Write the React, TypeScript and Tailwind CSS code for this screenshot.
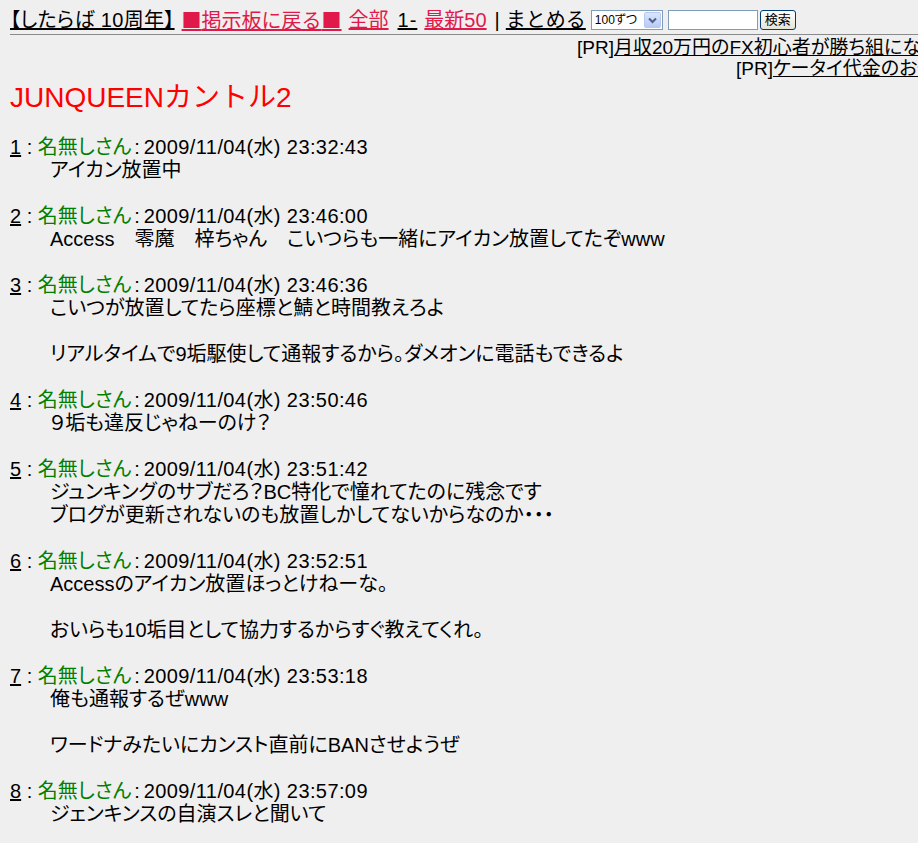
import React from 'react'

type Post = { no: number; time: string; lines: string[] }

const posts: Post[] = [
  { no: 1, time: '23:32:43', lines: ['アイカン放置中'] },
  { no: 2, time: '23:46:00', lines: ['Access　零魔　梓ちゃん　こいつらも一緒にアイカン放置してたぞwww'] },
  { no: 3, time: '23:46:36', lines: ['こいつが放置してたら座標と鯖と時間教えろよ', '', 'リアルタイムで9垢駆使して通報するから。ダメオンに電話もできるよ'] },
  { no: 4, time: '23:50:46', lines: ['９垢も違反じゃねーのけ？'] },
  { no: 5, time: '23:51:42', lines: ['ジュンキングのサブだろ？BC特化で憧れてたのに残念です', 'ブログが更新されないのも放置しかしてないからなのか・・・'] },
  { no: 6, time: '23:52:51', lines: ['Accessのアイカン放置ほっとけねーな。', '', 'おいらも10垢目として協力するからすぐ教えてくれ。'] },
  { no: 7, time: '23:53:18', lines: ['俺も通報するぜwww', '', 'ワードナみたいにカンスト直前にBANさせようぜ'] },
  { no: 8, time: '23:57:09', lines: ['ジェンキンスの自演スレと聞いて'] },
]

function NavBar() {
  return (
    <div className="flex items-center h-[24px] mt-[8px] text-[20px] leading-[24px] whitespace-nowrap">
      <a className="underline text-black tracking-[0.3px]">【したらば 10周年】</a>
      <a className="underline text-[#e0194a] ml-[7px] [font-feature-settings:normal]">
        <span className="font-['Noto_Sans_CJK_JP',sans-serif]">■</span>掲示板に戻る<span className="font-['Noto_Sans_CJK_JP',sans-serif]">■</span>
      </a>
      <a className="underline text-[#e0194a] ml-[7px] [font-feature-settings:normal]">全部</a>
      <a className="underline text-black ml-[9px] tracking-[1px]">1-</a>
      <a className="underline text-[#e0194a] ml-[7px]">最新50</a>
      <span className="ml-[8px] text-black">|</span>
      <a className="underline text-black ml-[6px] [font-feature-settings:normal]">まとめる</a>
      <div className="ml-[5px] flex items-center w-[72px] h-[20px] border border-[#7f9db9] bg-white">
        <span className="flex-1 pl-[3px] text-[12px] leading-[16px] text-black">100ずつ</span>
        <span className="w-[17px] h-[16px] mr-[1px] rounded-[2px] border border-[#b6c9f0] bg-gradient-to-b from-[#dbe5fd] to-[#b7caf6] flex items-center justify-center">
          <svg width="9" height="7" viewBox="0 0 9 7">
            <path d="M1 1.5 L4.5 5 L8 1.5" fill="none" stroke="#4d6185" strokeWidth="2" />
          </svg>
        </span>
      </div>
      <div className="ml-[5px] w-[90px] h-[20px] border border-[#7f9db9] bg-white" />
      <button className="ml-[2px] w-[36px] h-[20px] rounded-[3px] border border-[#003c74] bg-gradient-to-b from-white to-[#e6e3d6] text-[13px] leading-[16px] text-black">
        検索
      </button>
    </div>
  )
}

function PostItem({ post }: { post: Post }) {
  return (
    <div className="mb-[23px]">
      <div className="h-[23px] whitespace-nowrap">
        <a className="underline text-black">{post.no}</a>
        <span> : </span>
        <span className="text-[#008000]">名無しさん</span>
        <span className="pl-[3px] pr-[4px]">:</span>
        <span className="tracking-[0.4px]">2009/11/04(水) {post.time}</span>
      </div>
      <div className="ml-[40px]">
        {post.lines.map((l, i) => (
          <div key={i} className="h-[23px] whitespace-nowrap">{l}</div>
        ))}
      </div>
    </div>
  )
}

export default function App() {
  return (
    <div
      className="min-h-screen bg-[#efefef] text-black overflow-hidden [font-feature-settings:'palt']"
      style={{ fontFamily: '"Liberation Sans", "Noto Sans CJK JP", sans-serif' }}
    >
      <div className="pl-[10px]">
        <NavBar />
        <div className="mt-[2px] border-t border-[#8a8a8a]" />
      </div>

      <div className="mt-[2px] text-[19px] leading-[21px] whitespace-nowrap">
        <div className="pl-[577px]">
          [PR]<a className="underline">月収20万円のFX初心者が勝ち組になれる方法</a>
        </div>
        <div className="pl-[736px]">
          [PR]<a className="underline">ケータイ代金のお悩み解決</a>
        </div>
      </div>

      <div className="px-[10px]">
        <h1 className="mt-[2px] mb-[21px] text-[28px] leading-[34px] text-[#ff0000] font-normal [font-feature-settings:normal]">
          JUNQUEENカントル2
        </h1>
        <div className="text-[20px] leading-[23px]">
          {posts.map((p) => (
            <PostItem key={p.no} post={p} />
          ))}
        </div>
      </div>
    </div>
  )
}
